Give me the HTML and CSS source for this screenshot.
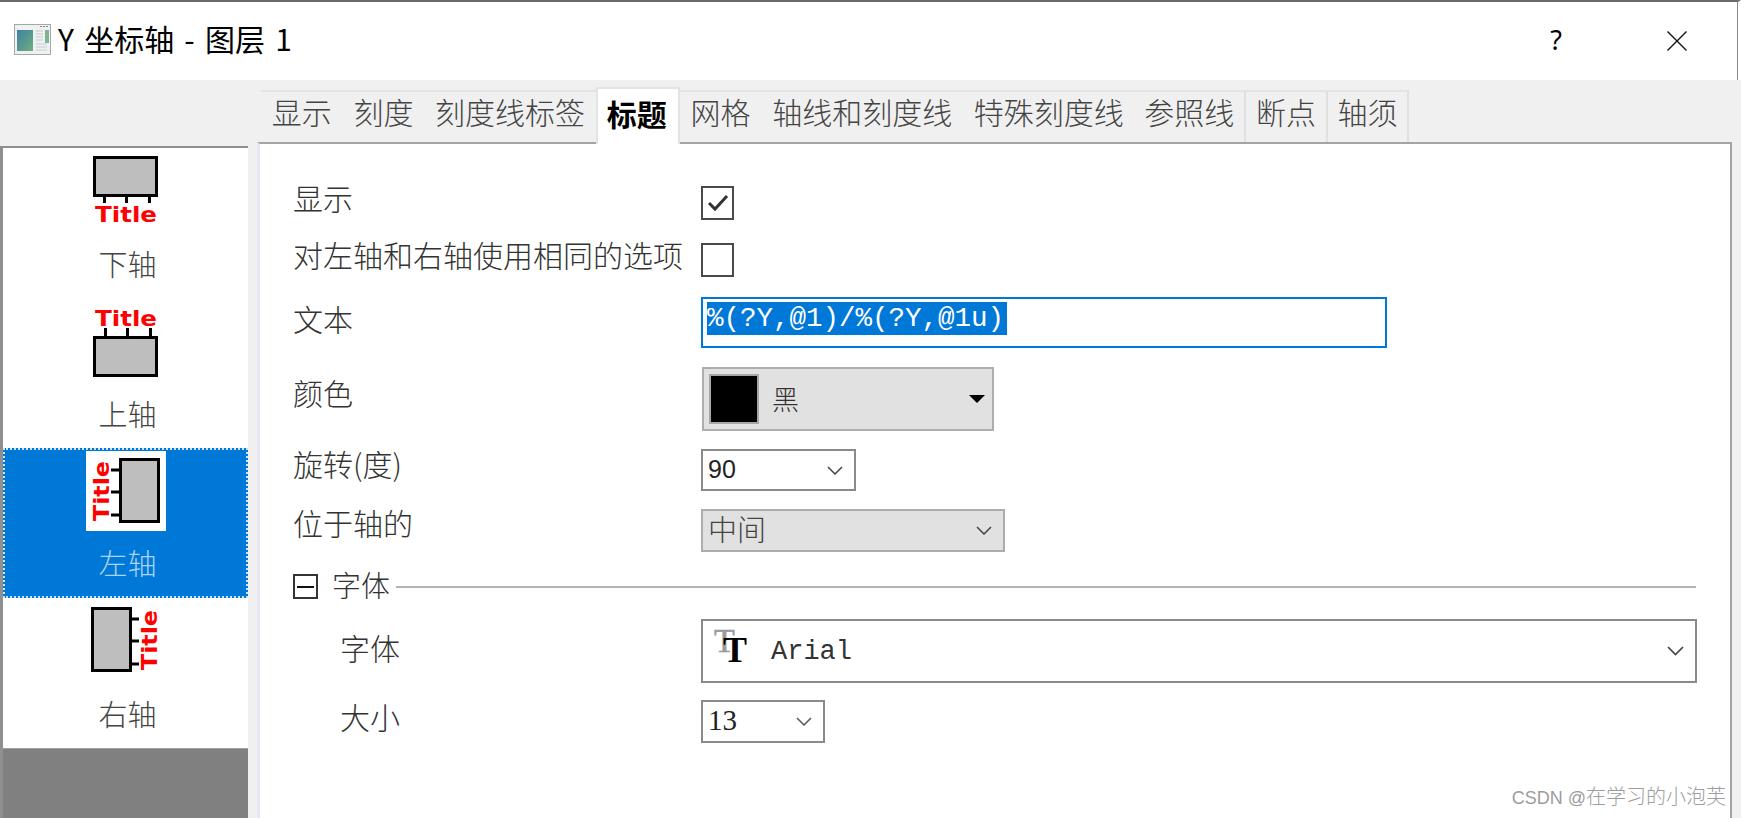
FILE: index.html
```html
<!DOCTYPE html>
<html lang="zh-CN">
<head>
<meta charset="utf-8">
<title>Y 坐标轴 - 图层 1</title>
<link rel="stylesheet" href="styles.css">
</head>
<body>
<div class="window">
  <header class="titlebar">
    <svg class="app-icon" width="38" height="32" viewBox="0 0 38 32">
      <defs><linearGradient id="g" x1="0" y1="0" x2="1" y2="1"><stop offset="0" stop-color="#3f7fa8"/><stop offset="1" stop-color="#6fb07a"/></linearGradient></defs>
      <rect x="0.5" y="0.5" width="36" height="30" fill="#eef0f2" stroke="#a4a8ac"/>
      <rect x="3" y="6" width="16" height="21" fill="url(#g)"/>
      <rect x="31" y="6" width="4" height="13" fill="#7fb58c"/>
      <path d="M22 7h7M22 10h7M22 13h7M22 16h7M22 20h11M22 23h11M22 26h11" stroke="#c9cdd1"/>
      <path d="M26 2.500h9" stroke="#888" stroke-dasharray="2 1"/>
    </svg>
    <div class="title-text">Y 坐标轴 - 图层 1</div>
    <div class="help">?</div>
    <svg class="close" width="20" height="20" viewBox="0 0 20 20"><path d="M0.500 0.500L19.500 19.500M19.500 0.500L0.500 19.500" stroke="#111" stroke-width="1.400"/></svg>
  </header>
  <div class="content">
    <aside class="sidebar">
      <div class="axis-item">
        <svg class="axis-icon" width="80" height="80" viewBox="0 0 80 80">
          <rect x="8.500" y="7.500" width="62" height="38" fill="#bebebe" stroke="#000" stroke-width="3"/>
          <path d="M18.500 46v7M40.500 46v7M63.500 46v7" stroke="#000" stroke-width="3"/>
          <text class="icon-title" x="9" y="72" textLength="62" lengthAdjust="spacingAndGlyphs">Title</text>
        </svg>
        <div class="axis-label">下轴</div>
      </div>
      <div class="axis-item">
        <svg class="axis-icon" width="80" height="80" viewBox="0 0 80 80">
          <text class="icon-title" x="9" y="26" textLength="62" lengthAdjust="spacingAndGlyphs">Title</text>
          <path d="M19.500 28v9M41.500 28v9M64.500 28v9" stroke="#000" stroke-width="3"/>
          <rect x="8.500" y="37.500" width="62" height="38" fill="#bebebe" stroke="#000" stroke-width="3"/>
        </svg>
        <div class="axis-label">上轴</div>
      </div>
      <div class="axis-item is-selected">
        <svg class="axis-icon" width="80" height="80" viewBox="0 0 80 80">
          <rect width="80" height="80" fill="#fff"/>
          <text class="icon-title" transform="translate(23 70) rotate(-90)" x="0" y="0" textLength="60" lengthAdjust="spacingAndGlyphs">Title</text>
          <path d="M25 19h9M25 41h9M25 64h9" stroke="#000" stroke-width="3"/>
          <rect x="34.500" y="8.500" width="38" height="62" fill="#bebebe" stroke="#000" stroke-width="3"/>
        </svg>
        <div class="axis-label">左轴</div>
      </div>
      <div class="axis-item">
        <svg class="axis-icon" width="80" height="80" viewBox="0 0 80 80">
          <rect x="6.500" y="8.500" width="38" height="62" fill="#bebebe" stroke="#000" stroke-width="3"/>
          <path d="M45 19h8M45 41h8M45 64h8" stroke="#000" stroke-width="3"/>
          <text class="icon-title" transform="translate(71 70) rotate(-90)" x="0" y="0" textLength="60" lengthAdjust="spacingAndGlyphs">Title</text>
        </svg>
        <div class="axis-label">右轴</div>
      </div>
      <div class="sidebar-fill"></div>
    </aside>
    <main class="main">
      <nav class="tabs">
        <div class="tab">显示</div>
        <div class="tab">刻度</div>
        <div class="tab">刻度线标签</div>
        <div class="tab is-active">标题</div>
        <div class="tab">网格</div>
        <div class="tab">轴线和刻度线</div>
        <div class="tab">特殊刻度线</div>
        <div class="tab tab-bordered">参照线</div>
        <div class="tab tab-bordered">断点</div>
        <div class="tab tab-bordered">轴须</div>
      </nav>
      <section class="panel">
        <div class="row r-show">
          <label class="field-label">显示</label>
          <span class="checkbox">
            <svg width="22" height="18" viewBox="0 0 22 18"><path d="M2 9l6 6L20 2" fill="none" stroke="#333" stroke-width="3"/></svg>
          </span>
        </div>
        <div class="row r-same">
          <label class="field-label">对左轴和右轴使用相同的选项</label>
          <span class="checkbox"></span>
        </div>
        <div class="row r-text">
          <label class="field-label">文本</label>
          <div class="text-input"><span class="selection">%(?Y,@1)/%(?Y,@1u)</span></div>
        </div>
        <div class="row r-color">
          <label class="field-label">颜色</label>
          <div class="color-select">
            <span class="swatch"></span>
            <span class="color-name">黑</span>
            <span class="triangle"></span>
          </div>
        </div>
        <div class="row r-rotate">
          <label class="field-label">旋转(度)</label>
          <div class="select select-rotate"><span class="value-sans">90</span>
            <svg class="chevron" width="16" height="9" viewBox="0 0 16 9"><path d="M1 1l7 7 7-7" fill="none" stroke="#444" stroke-width="1.500"/></svg>
          </div>
        </div>
        <div class="row r-position">
          <label class="field-label">位于轴的</label>
          <div class="select select-position"><span class="value-cjk">中间</span>
            <svg class="chevron" width="16" height="9" viewBox="0 0 16 9"><path d="M1 1l7 7 7-7" fill="none" stroke="#444" stroke-width="1.500"/></svg>
          </div>
        </div>
        <div class="section-head">
          <span class="collapse"><span class="collapse-bar"></span></span>
          <span class="section-name">字体</span>
          <span class="section-line"></span>
        </div>
        <div class="row r-font">
          <label class="field-label sub-label">字体</label>
          <div class="select select-font">
            <svg class="tt" width="40" height="60" viewBox="0 0 40 60">
              <text class="tt-back" x="0" y="31">T</text>
              <text class="tt-front" x="9" y="41">T</text>
            </svg>
            <span class="value-mono">Arial</span>
            <svg class="chevron" width="17" height="10" viewBox="0 0 17 10"><path d="M1 1l7.500 7.500L16 1" fill="none" stroke="#444" stroke-width="1.700"/></svg>
          </div>
        </div>
        <div class="row r-size">
          <label class="field-label sub-label">大小</label>
          <div class="select select-size"><span class="value-serif">13</span>
            <svg class="chevron" width="16" height="9" viewBox="0 0 16 9"><path d="M1 1l7 7 7-7" fill="none" stroke="#555" stroke-width="1.500"/></svg>
          </div>
        </div>
      </section>
    </main>
  </div>
  <div class="watermark"><span class="wm-latin">CSDN @</span>在学习的小泡芙</div>
</div>
</body>
</html>
```
FILE: styles.css
```css
* { box-sizing: border-box; }
html, body { margin: 0; padding: 0; height: 818px; overflow: hidden; background: #fff; }
body { font-family: "Noto Sans CJK SC", "Noto Sans", sans-serif; }

.window { position: relative; width: 1741px; height: 818px; display: flex; flex-direction: column; overflow: hidden; }

.titlebar {
  height: 80px; flex: none; display: flex; align-items: center;
  background: #fff; border-top: 2px solid #6a6a6a; border-right: 3px solid #fff;
  box-shadow: inset -1px 0 0 #8a8a8a;
  padding-left: 14px; color: #000;
}
.app-icon { flex: none; margin-right: 6px; margin-bottom: 2px; }
.title-text { flex: 1; font-size: 30px; line-height: 40px; font-weight: 400; white-space: pre; word-spacing: 3.5px; margin-bottom: 6px; }
.help { font-size: 27px; line-height: 30px; width: 30px; text-align: center; margin-right: 96px; margin-bottom: 2px; font-family: "Noto Sans", sans-serif; }
.close { flex: none; margin-right: 51px; }

.content { flex: 1; display: flex; background: #f0f0f0; min-height: 0; }

.sidebar {
  width: 248px; flex: none; margin-top: 66px; display: flex; flex-direction: column;
  background: #fff; border-top: 2px solid #8f8f8f; border-left: 3px solid #8f8f8f;
}
.axis-item { height: 150px; flex: none; display: flex; flex-direction: column; align-items: center; padding-top: 2px; }
.axis-icon { display: block; flex: none; }
.axis-label { font-size: 29px; line-height: 40px; margin-top: 13px; padding-left: 4px; color: #444; font-weight: 300; }
.icon-title { font-family: "DejaVu Sans", sans-serif; font-weight: 700; font-size: 22px; fill: #ff0000; }
.is-selected { background: #0078d7; outline: 2px dotted #cfe4f7; outline-offset: -2px; padding-top: 3px; }
.is-selected .axis-label { color: #a9d3f5; margin-top: 11px; }
.sidebar-fill { flex: 1; background: #808080; border-top: 1px solid #a0a0a0; }

.main { flex: 1; margin-left: 9px; margin-right: 9px; display: flex; flex-direction: column; min-width: 0; }

.tabs { height: 62px; flex: none; display: flex; align-items: flex-end; padding-left: 4px; }
.tab {
  height: 52px; flex: none; padding: 0 10.800px; font-size: 30px; line-height: 39px; color: #444; font-weight: 300;
  background: #f0f0f0; border-top: 2px solid #e3e3e3; white-space: nowrap;
}
.tab-bordered { border-right: 2px solid #e0e0e0; padding: 0 9.800px; }
.is-active {
  position: relative; z-index: 1; height: 57px; margin-bottom: -2px; padding: 0 11px 0 9px;
  background: #fff; color: #000; font-weight: 700; line-height: 48px;
  border: 2px solid #e3e3e3; border-bottom: 0;
}

.panel {
  flex: 1; background: #fff; border-top: 2px solid #a4a4a4; border-left: 3px solid #e6e9f5;
  border-right: 2px solid #a4a4a4; padding: 42px 0 0 33px; display: flex; flex-direction: column;
  min-height: 0;
}

.row { display: grid; grid-template-columns: 408px 1fr; grid-template-rows: 100%; align-items: center; flex: none; }
.field-label { font-size: 30px; line-height: 30px; color: #333; font-weight: 300; white-space: nowrap; margin-bottom: 10px; }
.sub-label { padding-left: 47px; }

.r-show { height: 34px; }
.r-show .field-label { margin-bottom: 12px; }
.r-same { height: 33px; margin-top: 23px; }
.r-same .field-label { margin-bottom: 12px; }
.r-text { height: 51px; margin-top: 21px; }
.r-color { height: 64px; margin-top: 19px; }
.r-color .field-label { margin-bottom: 14px; }
.r-rotate { height: 42px; margin-top: 18px; }
.r-rotate .field-label { margin-bottom: 14px; }
.r-position { height: 43px; margin-top: 18px; }
.r-position .field-label { margin-bottom: 17px; }
.r-font { height: 64px; margin-top: 20px; }
.r-font .field-label { margin-bottom: 9px; }
.r-size { height: 43px; margin-top: 17px; }
.r-size .field-label { margin-bottom: 11px; }

.checkbox {
  width: 33px; height: 34px; border: 2px solid #4a4a4a; background: #fff;
  display: flex; align-items: center; justify-content: center;
}

.text-input {
  width: 686px; height: 51px; border: 2px solid #0078d7; padding: 3px 0 0 4px;
  background: #fff;
}
.selection {
  display: inline-block; height: 33px; width: 300px; background: #0078d7; color: #fff;
  font-family: "Liberation Mono", monospace; font-size: 27.500px; line-height: 33px; white-space: pre;
}

.color-select {
  width: 292px; height: 64px; margin-left: 1px; background: #e1e1e1; border: 2px solid #adadad;
  display: flex; align-items: center; padding-left: 5px; position: relative;
}
.swatch { width: 50px; height: 50px; background: #000; border: 2px solid #a6a6a6; flex: none; }
.color-name { font-size: 27px; line-height: 36px; margin-left: 13px; color: #333; font-weight: 300; }
.triangle {
  margin-left: auto; margin-right: 7px; width: 0; height: 0;
  border-left: 8px solid transparent; border-right: 8px solid transparent; border-top: 8px solid #000;
}

.select {
  height: 100%; background: #fff; border: 2px solid #8a8a8a;
  display: flex; align-items: center; padding-left: 5px;
}
.select-rotate { width: 155px; }
.select-position { width: 304px; background: #e1e1e1; border-color: #adadad; }
.select-font { width: 996px; padding-left: 11px; }
.select-size { width: 124px; }
.chevron { margin-left: auto; margin-right: 11px; flex: none; }

.value-sans { font-family: "Liberation Sans", sans-serif; font-size: 25px; color: #222; margin-bottom: 2px; }
.value-cjk { font-size: 29px; line-height: 36px; color: #444; font-weight: 300; margin-bottom: 5px; }
.value-serif { font-family: "Liberation Serif", serif; font-size: 29px; color: #222; margin-bottom: 2px; }
.value-mono { font-family: "Liberation Mono", monospace; font-size: 27px; color: #333; margin-left: 17px; padding-top: 2px; }

.tt { flex: none; }
.tt-back { font-family: "Liberation Serif", serif; font-size: 34px; fill: #999; stroke: #999; stroke-width: 0.6px; }
.tt-front { font-family: "Liberation Serif", serif; font-weight: 700; font-size: 36px; fill: #000; }

.section-head { display: flex; align-items: center; height: 25px; margin-top: 22px; flex: none; }
.collapse {
  width: 25px; height: 25px; border: 2px solid #333; flex: none;
  display: flex; align-items: center; justify-content: center;
}
.collapse-bar { width: 17px; height: 2px; background: #111; }
.section-name { font-size: 29px; line-height: 30px; margin-left: 14px; margin-bottom: 5px; color: #333; font-weight: 300; flex: none; }
.section-line { width: 1300px; height: 2px; background: #b4b4b4; margin-left: 6px; flex: none; }

.watermark {
  position: absolute; right: 15px; bottom: 6px; font-size: 20px; line-height: 28px;
  color: #9d9d9d; font-family: "Liberation Sans", "Noto Sans CJK SC", sans-serif; font-weight: 300;
}
.wm-latin { font-size: 18px; }
```
